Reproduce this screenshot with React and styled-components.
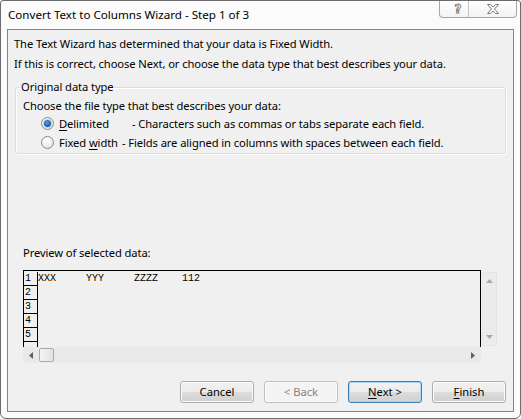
import React from 'react';
import styled, { createGlobalStyle } from 'styled-components';

const UI = `"Noto Sans", "Open Sans", sans-serif`;
const MONO = `"Liberation Mono", "DejaVu Sans Mono", monospace`;

const Global = createGlobalStyle`
  html, body { margin: 0; padding: 0; background: #ffffff; }
  * { box-sizing: border-box; }
`;

const Window = styled.div`
  width: 521px;
  height: 419px;
  border: 1px solid #6c6c6c;
  border-radius: 3px 3px 6px 6px;
  background: #fbfbfb;
  display: flex;
  flex-direction: column;
  padding: 0 6px 6px;
  font-family: ${UI};
  font-size: 11.2px;
  letter-spacing: -0.1px;
  color: #000;
  overflow: hidden;
`;

const TitleBar = styled.div`
  height: 28px;
  display: flex;
  align-items: flex-start;
  justify-content: space-between;
`;

const Title = styled.div`
  margin: 6px 0 0 1px;
  line-height: 16px;
  font-size: 11.6px;
  letter-spacing: 0;
  color: #000;
`;

const CaptionGroup = styled.div`
  display: flex;
  height: 17px;
  margin-right: -3px;
  border: 1px solid #a6a6a6;
  border-top: none;
  border-radius: 0 0 4px 4px;
  background: linear-gradient(#ffffff, #f3f3f3);
  overflow: hidden;
`;

const CaptionButton = styled.div`
  width: ${(p) => p.$w}px;
  height: 100%;
  display: flex;
  align-items: center;
  justify-content: center;
  & + & { border-left: 1px solid #c4c4c4; }
`;

const HelpGlyph = styled.span`
  font-family: "DejaVu Sans", sans-serif;
  font-weight: bold;
  font-size: 12px;
  line-height: 12px;
  color: #ffffff;
  -webkit-text-stroke: 0.9px #7a7a7a;
  margin: -1px 0 0 8px;
`;

const Client = styled.div`
  flex: 1;
  border: 1px solid #858585;
  background: #f0f0f0;
  display: flex;
  flex-direction: column;
  padding: 4px 7px 8px 6px;
`;

const InfoLine = styled.div`
  line-height: 20px;
  white-space: nowrap;
`;

const GroupBox = styled.fieldset`
  margin: 5px 0 0 1px;
  padding: 3px 0 1px 0;
  min-width: 0;
  border: 1px solid #d5dfe5;
  border-radius: 3px;
  box-shadow: inset 1px 1px 0 #ffffff, 1px 1px 0 #ffffff;
`;

const Legend = styled.legend`
  margin-left: 4px;
  padding: 0 1px;
  line-height: 16px;
`;

const GroupText = styled.div`
  margin-left: 7px;
  line-height: 16px;
`;

const RadioRow = styled.div`
  display: flex;
  align-items: center;
  height: 19px;
  padding-left: 25px;
`;

const RadioCircle = styled.span`
  position: relative;
  width: 13px;
  height: 13px;
  border-radius: 50%;
  border: 1px solid #8b8b8b;
  background: radial-gradient(circle at 40% 35%, #ffffff 0%, #f2f2f2 45%, #d6d6d6 100%);
  flex: none;
  &::after {
    content: "";
    display: ${(p) => (p.$checked ? 'block' : 'none')};
    position: absolute;
    left: 2px;
    top: 2px;
    width: 7px;
    height: 7px;
    border-radius: 50%;
    background: radial-gradient(circle at 45% 40%, #5a9ee0 0%, #2266b4 55%, #163f78 100%);
    box-shadow: 0 0 0 1px #b9d6ef;
  }
`;

const RadioLabel = styled.span`
  width: ${(p) => p.$w}px;
  margin-left: 5px;
  flex: none;
  white-space: nowrap;
`;

const Desc = styled.span`
  white-space: nowrap;
`;

const U = styled.span`
  text-decoration: underline;
  text-underline-offset: 2px;
`;

const PreviewLabel = styled.div`
  margin: 91px 0 0 9px;
  line-height: 16px;
`;

const PreviewArea = styled.div`
  display: flex;
  align-items: flex-start;
  margin: 9px 0 0 9px;
`;

const PreviewFrame = styled.div`
  width: 458px;
  display: flex;
  flex-direction: column;
`;

const Viewport = styled.div`
  height: 77px;
  border: 1px solid #000;
  border-bottom: none;
  padding-top: 1px;
  overflow: hidden;
  background: #f0f0f0;
`;

const DataRow = styled.div`
  display: flex;
  height: 14px;
`;

const NumCell = styled.div`
  width: 14px;
  height: 14px;
  border-right: 1px solid #000;
  border-bottom: 1px solid #000;
  font-family: ${MONO};
  font-size: 10px;
  letter-spacing: 0;
  line-height: 14px;
  padding-left: 1px;
  flex: none;
`;

const DataCell = styled.div`
  font-family: ${MONO};
  font-size: 10px;
  letter-spacing: 0;
  line-height: 14px;
  white-space: pre;
`;

const HScroll = styled.div`
  height: 16px;
  display: flex;
  align-items: center;
  background: #e9e9e9;
`;

const ScrollArrow = styled.div`
  width: ${(p) => p.$w || 16}px;
  height: 16px;
  display: flex;
  align-items: center;
  justify-content: center;
  flex: none;
`;

const Thumb = styled.div`
  width: 15px;
  height: 14px;
  border: 1px solid #acacac;
  border-radius: 2px;
  background: linear-gradient(90deg, #f3f3f3, #e2e2e2);
  flex: none;
`;

const Track = styled.div`
  flex: 1;
`;

const VScroll = styled.div`
  width: 15px;
  height: 74px;
  margin: 2px 0 0 1px;
  display: flex;
  flex-direction: column;
  justify-content: space-between;
  background: #ececec;
  border: 1px solid #e6e6e6;
`;

const ButtonRow = styled.div`
  display: flex;
  justify-content: flex-end;
  gap: 10px;
  margin-top: 18px;
`;

const Button = styled.div`
  width: 74px;
  height: 22px;
  display: flex;
  align-items: center;
  justify-content: center;
  border: 1px solid ${(p) => (p.$default ? '#3c7fb1' : p.$disabled ? '#bfbfbf' : '#acacac')};
  border-radius: 3px;
  background: ${(p) =>
    p.$disabled ? '#f4f4f4' : 'linear-gradient(#f2f2f2 0%, #ebebeb 50%, #dddddd 51%, #cfcfcf 100%)'};
  box-shadow: ${(p) => (p.$default ? 'inset 0 0 0 1px #a8d6f5' : 'inset 0 0 0 1px #fcfcfc')};
  color: ${(p) => (p.$disabled ? '#838383' : '#000')};
  line-height: 16px;
  letter-spacing: 0;
`;

const Tri = ({ dir, color }) => {
  const pts = {
    left: '4,0 4,7 0,3.5',
    right: '0,0 0,7 4,3.5',
    up: '0,4 7,4 3.5,0',
    down: '0,0 7,0 3.5,4',
  }[dir];
  const horiz = dir === 'left' || dir === 'right';
  return (
    <svg width={horiz ? 4 : 7} height={horiz ? 7 : 4} viewBox={horiz ? '0 0 4 7' : '0 0 7 4'}>
      <polygon points={pts} fill={color} />
    </svg>
  );
};

const CloseIcon = () => (
  <svg width="12" height="10" viewBox="0 0 12 10">
    <polygon
      points="0.5,0.5 3.5,0.5 6,3 8.5,0.5 11.5,0.5 7.5,5 11.5,9.5 8.5,9.5 6,7 3.5,9.5 0.5,9.5 4.5,5"
      fill="#ffffff"
      stroke="#7a7a7a"
      strokeWidth="1"
      strokeLinejoin="round"
    />
  </svg>
);

const rows = [
  { n: '1', text: 'XXX     YYY     ZZZZ    112' },
  { n: '2', text: '' },
  { n: '3', text: '' },
  { n: '4', text: '' },
  { n: '5', text: '' },
  { n: '', text: '' },
];

export default function App() {
  return (
    <>
      <Global />
      <Window>
        <TitleBar>
          <Title>Convert Text to Columns Wizard - Step 1 of 3</Title>
          <CaptionGroup>
            <CaptionButton $w={28}>
              <HelpGlyph>?</HelpGlyph>
            </CaptionButton>
            <CaptionButton $w={48}>
              <CloseIcon />
            </CaptionButton>
          </CaptionGroup>
        </TitleBar>
        <Client>
          <InfoLine>The Text Wizard has determined that your data is Fixed Width.</InfoLine>
          <InfoLine>If this is correct, choose Next, or choose the data type that best describes your data.</InfoLine>
          <GroupBox>
            <Legend>Original data type</Legend>
            <GroupText>Choose the file type that best describes your data:</GroupText>
            <RadioRow>
              <RadioCircle $checked />
              <RadioLabel $w={73}>
                <U>D</U>elimited
              </RadioLabel>
              <Desc>- Characters such as commas or tabs separate each field.</Desc>
            </RadioRow>
            <RadioRow>
              <RadioCircle />
              <RadioLabel $w={63}>
                Fixed <U>w</U>idth
              </RadioLabel>
              <Desc>- Fields are aligned in columns with spaces between each field.</Desc>
            </RadioRow>
          </GroupBox>
          <PreviewLabel>Preview of selected data:</PreviewLabel>
          <PreviewArea>
            <PreviewFrame>
              <Viewport>
                {rows.map((r, i) => (
                  <DataRow key={i}>
                    <NumCell>{r.n}</NumCell>
                    <DataCell>{r.text}</DataCell>
                  </DataRow>
                ))}
              </Viewport>
              <HScroll>
                <ScrollArrow $w={16}>
                  <Tri dir="left" color="#606060" />
                </ScrollArrow>
                <Thumb />
                <Track />
                <ScrollArrow $w={17}>
                  <Tri dir="right" color="#606060" />
                </ScrollArrow>
              </HScroll>
            </PreviewFrame>
            <VScroll>
              <ScrollArrow $w={13}>
                <Tri dir="up" color="#a8a8a8" />
              </ScrollArrow>
              <ScrollArrow $w={13}>
                <Tri dir="down" color="#a8a8a8" />
              </ScrollArrow>
            </VScroll>
          </PreviewArea>
          <ButtonRow>
            <Button>Cancel</Button>
            <Button $disabled>&lt; Back</Button>
            <Button $default>
              <span>
                <U>N</U>ext &gt;
              </span>
            </Button>
            <Button>
              <span>
                <U>F</U>inish
              </span>
            </Button>
          </ButtonRow>
        </Client>
      </Window>
    </>
  );
}
